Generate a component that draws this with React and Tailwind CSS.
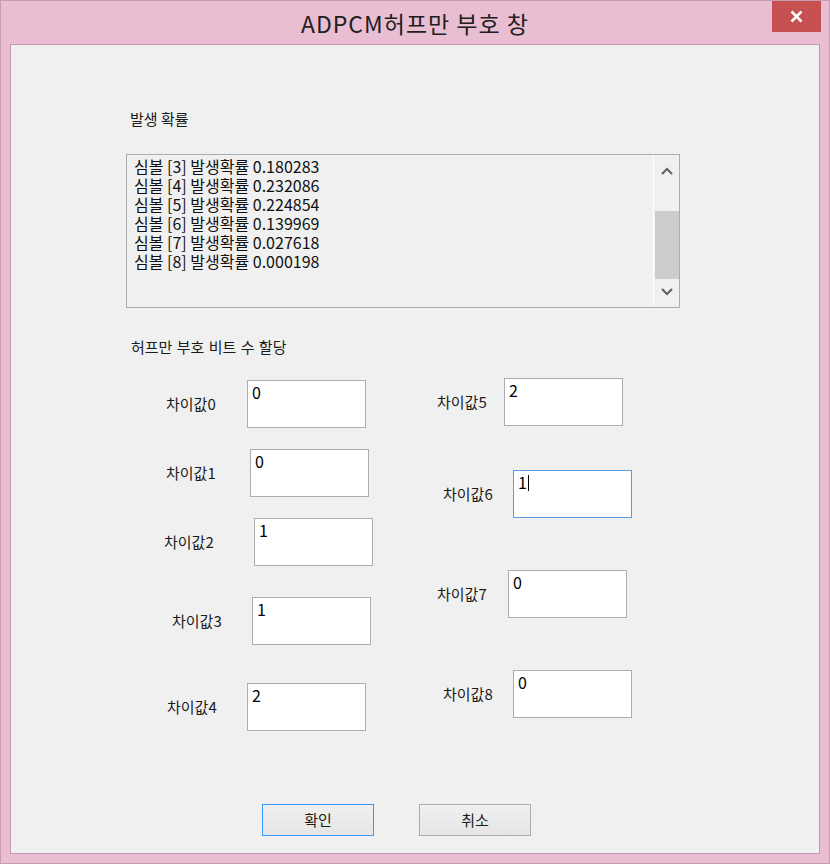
import React from "react";

const probs = [
  ["3", "0.180283"],
  ["4", "0.232086"],
  ["5", "0.224854"],
  ["6", "0.139969"],
  ["7", "0.027618"],
  ["8", "0.000198"],
];

const leftFields = [
  { label: "차이값0", value: "0", row: "mt-[23px] ml-[155px]", lw: "w-[81px]" },
  { label: "차이값1", value: "0", row: "mt-[21px] ml-[155px]", lw: "w-[84px]" },
  { label: "차이값2", value: "1", row: "mt-[21px] ml-[153px]", lw: "w-[90px]" },
  { label: "차이값3", value: "1", row: "mt-[31px] ml-[161px]", lw: "w-[80px]" },
  { label: "차이값4", value: "2", row: "mt-[38px] ml-[156px]", lw: "w-[80px]" },
];

const rightFields = [
  { label: "차이값5", value: "2", row: "mt-[21px] ml-[26px]", lw: "w-[67px]" },
  { label: "차이값6", value: "1", row: "mt-[44px] ml-[32px]", lw: "w-[70px]", focus: true },
  { label: "차이값7", value: "0", row: "mt-[52px] ml-[26px]", lw: "w-[71px]" },
  { label: "차이값8", value: "0", row: "mt-[52px] ml-[32px]", lw: "w-[70px]" },
];

const Field = ({ label, value, row, lw, focus }) => (
  <div className={`flex items-center ${row}`}>
    <span className={`${lw} text-[15px] text-[#1b1b1b]`}>{label}</span>
    <div
      className={`h-[48px] w-[119px] bg-white pl-[4px] pt-[1px] text-[16px] leading-[20px] text-black border ${
        focus ? "border-[#569de5]" : "border-[#abadb3]"
      }`}
    >
      {value}
      {focus && <span className="inline-block h-[16px] w-px bg-black align-[-2px] ml-px" />}
    </div>
  </div>
);

const Chevron = ({ up }) => (
  <svg width="12" height="8" viewBox="0 0 12 8">
    <polyline
      points={up ? "1,7 6,2 11,7" : "1,1 6,6 11,1"}
      fill="none"
      stroke="#606060"
      strokeWidth="2"
    />
  </svg>
);

export default function App() {
  return (
    <div
      className="w-[830px] h-[864px] bg-[#e9bed2] border border-[#c89cb2] px-[9px]"
      style={{ fontFamily: '"Noto Sans CJK KR", "Noto Sans", sans-serif' }}
    >
      {/* Title bar */}
      <div className="relative h-[43px] flex items-center justify-center">
        <span className="text-[23px] text-[#202020] tracking-[1px] pt-[1px]">ADPCM허프만 부호 창</span>
        <div className="absolute right-[-1px] top-0 h-[31px] w-[49px] bg-[#c75050] flex items-center justify-center">
          <svg width="13" height="13" viewBox="0 0 13 13">
            <path d="M1.5 1.5 L11.5 11.5 M11.5 1.5 L1.5 11.5" stroke="#fff" strokeWidth="2.5" />
          </svg>
        </div>
      </div>

      {/* Client area */}
      <div className="h-[810px] w-[810px] bg-[#f0f0f0] border border-[#c397ad] flex flex-col">
        <div className="mt-[64px] ml-[119px] text-[15px] leading-[20px] text-[#1b1b1b]">발생 확률</div>

        <div className="mt-[25px] ml-[115px] h-[154px] w-[554px] border border-[#acacac] flex">
          <div className="flex-1 pl-[7px] pt-[2px] text-[16px] leading-[19px] text-[#101010]">
            {probs.map(([n, p]) => (
              <div key={n}>
                심볼 [{n}] 발생확률 {p}
              </div>
            ))}
          </div>
          <div className="w-[26px] border-l border-white flex flex-col items-center">
            <div className="h-[30px] flex items-center justify-center pt-[2px]">
              <Chevron up />
            </div>
            <div className="mt-[26px] h-[69px] w-[24px] bg-[#cdcdcd]" />
            <div className="flex-1" />
            <div className="h-[28px] flex items-center justify-center pb-[2px]">
              <Chevron />
            </div>
          </div>
        </div>

        <div className="mt-[29px] ml-[120px] text-[15px] leading-[20px] text-[#1b1b1b] [word-spacing:1px]">
          허프만 부호 비트 수 할당
        </div>

        <div className="flex items-start">
          <div className="w-[400px] flex flex-col">
            {leftFields.map((f) => (
              <Field key={f.label} {...f} />
            ))}
          </div>
          <div className="flex flex-col">
            {rightFields.map((f) => (
              <Field key={f.label} {...f} />
            ))}
          </div>
        </div>

        <div className="mt-[73px] ml-[251px] flex gap-[45px] text-[15px] text-[#1b1b1b]">
          <button className="h-[32px] w-[112px] border border-[#3399ff] bg-gradient-to-b from-[#f0f0f0] to-[#e5e5e5]">
            확인
          </button>
          <button className="h-[32px] w-[112px] border border-[#acacac] bg-gradient-to-b from-[#f0f0f0] to-[#e5e5e5]">
            취소
          </button>
        </div>
      </div>
    </div>
  );
}
